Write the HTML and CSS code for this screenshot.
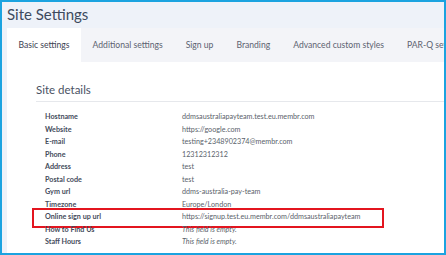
FILE: index.html
```html
<!DOCTYPE html>
<html lang="en">
<head>
    <meta charset="UTF-8">
    <title>Site Settings</title>
    <link rel="stylesheet" href="styles.css">
</head>
<body>
    <div class="frame">
        <h1 class="page-title">Site Settings</h1>
        <div class="panel">
            <!-- Sekmeler -->
            <nav class="tabs">
                <span class="tab active">Basic settings</span>
                <span class="tab">Additional settings</span>
                <span class="tab">Sign up</span>
                <span class="tab">Branding</span>
                <span class="tab">Advanced custom styles</span>
                <span class="tab">PAR-Q settings</span>
            </nav>
            <!-- Site bilgileri -->
            <section class="content">
                <h2 class="section-title">Site details</h2>
                <div class="rows">
                    <div class="row"><span class="label">Hostname</span><span class="value">ddmsaustraliapayteam.test.eu.membr.com</span></div>
                    <div class="row"><span class="label">Website</span><span class="value">https://google.com</span></div>
                    <div class="row"><span class="label">E-mail</span><span class="value">testing+2348902374@membr.com</span></div>
                    <div class="row"><span class="label">Phone</span><span class="value">12312312312</span></div>
                    <div class="row"><span class="label">Address</span><span class="value">test</span></div>
                    <div class="row"><span class="label">Postal code</span><span class="value">test</span></div>
                    <div class="row"><span class="label">Gym url</span><span class="value">ddms-australia-pay-team</span></div>
                    <div class="row"><span class="label">Timezone</span><span class="value">Europe/London</span></div>
                    <div class="row highlight"><span class="label">Online sign up url</span><span class="value">https://signup.test.eu.membr.com/ddmsaustraliapayteam</span></div>
                    <div class="row"><span class="label">How to Find Us</span><span class="value empty">This field is empty.</span></div>
                    <div class="row"><span class="label">Staff Hours</span><span class="value empty">This field is empty.</span></div>
                </div>
            </section>
        </div>
    </div>
</body>
</html>
```

FILE: styles.css
```css
/* Genel sayfa */
body {
    margin: 0;
    font-family: Lato, "Open Sans", sans-serif;
}

.frame {
    width: 446px;
    height: 255px;
    box-sizing: border-box;
    border: 2px solid #1ba3e0;
    background-color: #eef2f9;
    overflow: hidden;
    display: flex;
    flex-direction: column;
}

.page-title {
    margin: 0;
    padding-left: 5px;
    height: 26px;
    line-height: 24px;
    font-size: 15px;
    font-weight: normal;
    color: #3d4a5e;
}

.panel {
    margin-left: 5px;
    flex: 1;
    background-color: white;
}

/* Sekmeler */
.tabs {
    display: flex;
    height: 34px;
    background-color: #f3f4f8;
    white-space: nowrap;
}

.tab {
    padding: 0 11.5px;
    line-height: 34px;
    font-size: 8.6px;
    color: #5c6270;
}

.tab.active {
    background-color: white;
    color: #3b4252;
}

/* İçerik */
.content {
    padding: 20px 0 0 29px;
}

.section-title {
    margin: 0;
    padding-bottom: 3px;
    border-bottom: 1px solid #e6e8ec;
    font-size: 11.5px;
    font-weight: normal;
    line-height: 16px;
    color: #4a5263;
}

.rows {
    padding: 9px 0 0 9px;
}

.row {
    position: relative;
    display: flex;
    height: 12.5px;
    line-height: 12.5px;
    font-size: 7.2px;
    white-space: nowrap;
}

.label {
    width: 137px;
    font-weight: bold;
    color: #454c5c;
}

.value {
    color: #5a5f6b;
}

.value.empty {
    font-style: italic;
}

/* Kırmızı işaret kutusu */
.highlight::after {
    content: "";
    position: absolute;
    left: -13px;
    top: -3px;
    width: 348px;
    height: 16px;
    border: 2px solid #e3151f;
}
```
